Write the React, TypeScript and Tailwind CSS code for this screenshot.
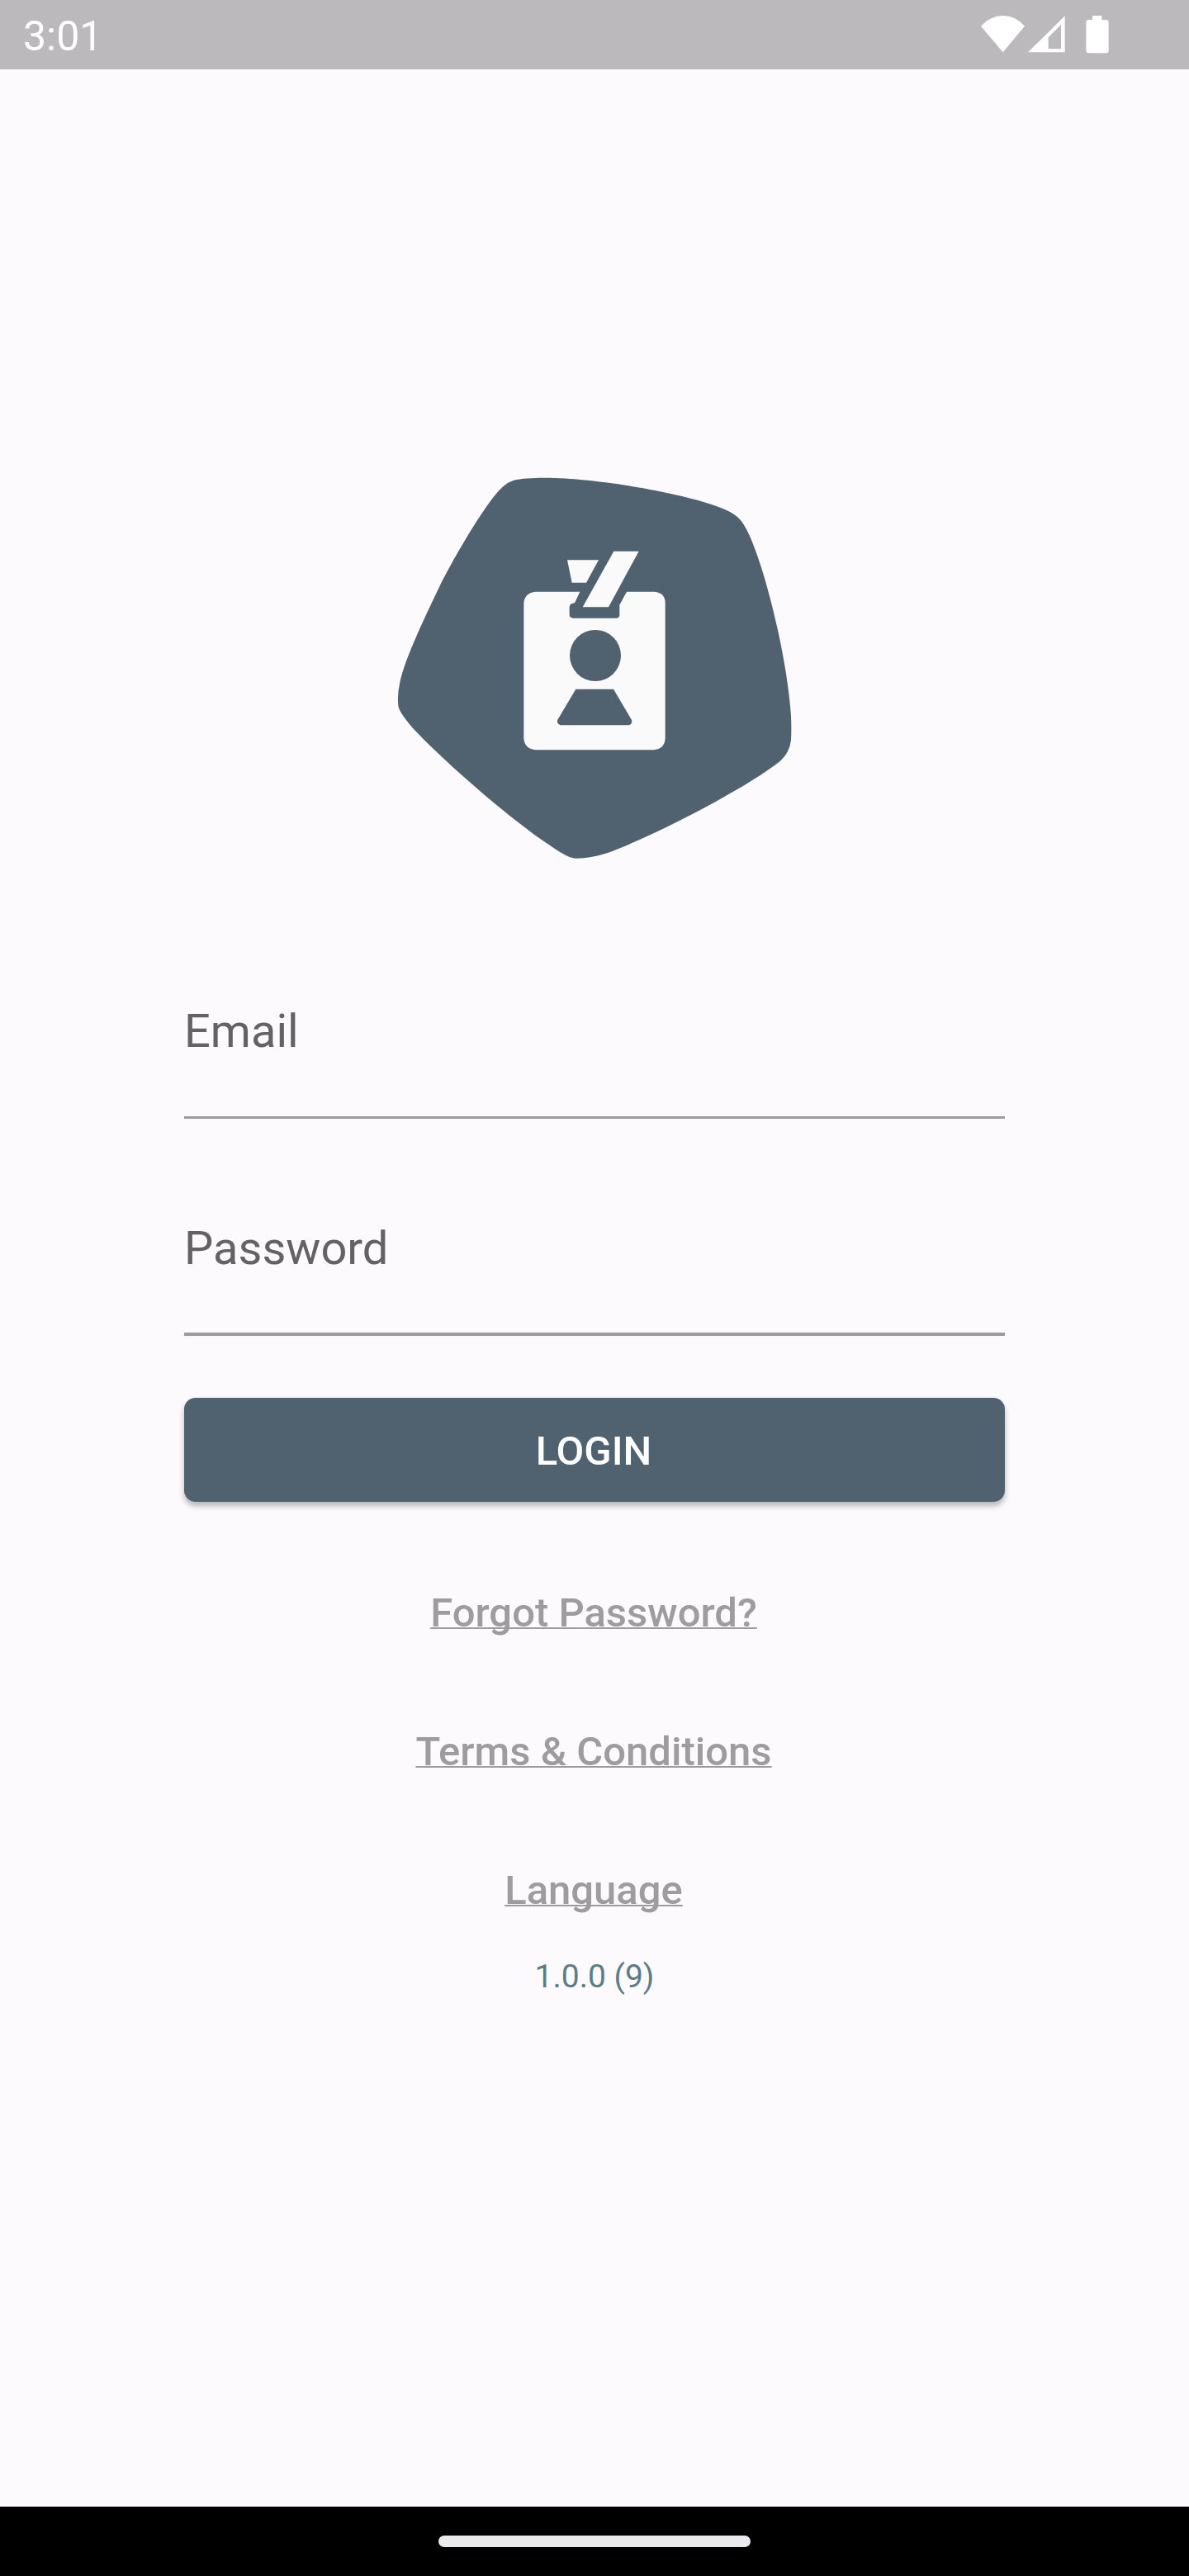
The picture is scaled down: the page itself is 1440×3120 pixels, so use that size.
import { useState } from "react";

interface Field {
  label: string;
  name: string;
  type: string;
}

const fields: Field[] = [
  { label: "Email", name: "email", type: "email" },
  { label: "Password", name: "password", type: "password" },
];

const links = ["Forgot Password?", "Terms & Conditions", "Language"];

function StatusBar() {
  return (
    <header className="flex h-[84px] items-start justify-between bg-[#bcb9bc] pl-[28px] pr-[97.33px] text-white">
      <span className="pt-[5px] text-[50px] leading-[79px]">3:01</span>
      <div className="flex pt-[18px]">
        <svg className="h-[47px] w-[53.33px]" viewBox="84 54 160 141" fill="currentColor">
          <path d="M84 95Q118 57 164 57T243 95L164 190Z" />
        </svg>
        <svg className="ml-1 h-[47px] w-[45.33px]" viewBox="256 54 136 141" fill="currentColor">
          <path fillRule="evenodd" d="M256 190L390 58V190ZM330 136V177H376V90Z" />
        </svg>
        <svg className="ml-6 h-[47px] w-[28px]" viewBox="464 54 84 141" fill="currentColor">
          <path d="M488 57H522V72H538Q547 72 547 81V184Q547 193 538 193H474Q465 193 465 184V81Q465 72 474 72H488Z" />
        </svg>
      </div>
    </header>
  );
}

function Logo() {
  return (
    <svg className="mt-[476px] h-[500px] w-[520px]" viewBox="0 0 1560 1500">
      <path
        fill="#50616f"
        d="M485 66C550 50 680 58 735 64C900 78 1150 125 1255 172C1305 195 1320 215 1345 270C1410 420 1480 720 1494 920Q1496 970 1494 1010Q1488 1055 1455 1085C1330 1185 990 1360 830 1418Q770 1438 712 1439Q690 1437 665 1422C510 1330 230 1085 115 960Q75 912 68 890Q62 850 72 805C85 730 150 590 215 455C270 345 350 210 410 130Q450 76 485 66Z"
      />
      <g fill="#fbfafb">
        <path d="M681 355H795L750 437H698Z" />
        <path d="M850 323H941L831 526H737Z" />
        <path
          fillRule="evenodd"
          d="M567 470H727L708 511Q689 512 689 526V553Q689 566 702 566H860Q871 566 871 553V518L897 470H995Q1037 472 1037 512V1003Q1035 1042 995 1045H567Q526 1042 523 1003V512Q526 473 567 470ZM783 609A93 93 0 1 0 783 795A93 93 0 1 0 783 609ZM712 824L646 935Q641 950 657 955H904Q919 951 915 936L849 824Z"
        />
      </g>
    </svg>
  );
}

function LoginForm() {
  const [values, setValues] = useState<Record<string, string>>({});

  const handleChange = (e: React.ChangeEvent<HTMLInputElement>) => {
    const { name, value } = e.target;
    setValues((prev) => ({ ...prev, [name]: value }));
  };

  return (
    <form
      onSubmit={(e) => e.preventDefault()}
      className="mt-[149px] flex w-[994px] flex-col"
    >
      <div className="flex flex-col gap-[116.5px]">
        {fields.map((field) => (
          <div key={field.name} className="flex flex-col">
            <label
              htmlFor={field.name}
              className="text-[56px] leading-[80px] text-[#656266]"
            >
              {field.label}
            </label>
            <input
              id={field.name}
              name={field.name}
              type={field.type}
              value={values[field.name] ?? ""}
              onChange={handleChange}
              className="h-[62.6px] text-[48px] outline-none"
            />
            <div className="h-[3.5px] bg-[#9d9a9e]" />
          </div>
        ))}
      </div>

      <button
        type="submit"
        className="mt-[75.3px] h-[126px] rounded-[14px] bg-[#50616f] pt-[4px] pr-[2px] text-[49px] font-medium text-white shadow-[0_5px_7px_rgba(0,0,0,0.28)]"
      >
        LOGIN
      </button>
    </form>
  );
}

export default function App() {
  return (
    <div className="flex h-[3120px] w-[1440px] flex-col bg-[#fcfafd] font-['Roboto',sans-serif]">
      <StatusBar />

      <main className="flex flex-1 flex-col items-center">
        <Logo />
        <LoginForm />

        <nav className="mt-[95px] flex flex-col items-center gap-[88px] pr-[2px]">
          {links.map((link) => (
            <a
              key={link}
              href="#"
              className="text-[49px] leading-[80px] font-medium text-[#9f9ca0] underline decoration-2 underline-offset-1 [text-decoration-skip-ink:none]"
            >
              {link}
            </a>
          ))}
        </nav>

        <p className="mt-[36px] text-[39px] leading-[56px] text-[#5d7d86]">
          1.0.0 (9)
        </p>
      </main>

      <footer className="flex h-[84px] justify-center bg-black pt-[35px]">
        <div className="h-[14px] w-[378px] rounded-full bg-[#ebe9eb]" />
      </footer>
    </div>
  );
}
